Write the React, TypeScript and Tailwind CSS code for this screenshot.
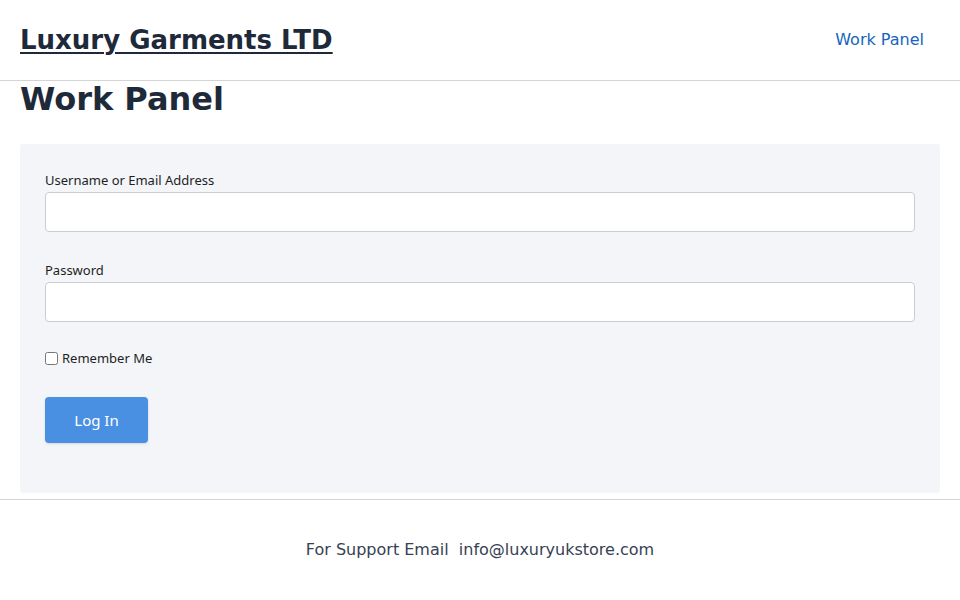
export default function App() {
    return (
        <div className="min-h-[600px] bg-white text-gray-800" style={{ fontFamily: '"DejaVu Sans", sans-serif' }}>
            <header className="flex h-[81px] items-center justify-between border-b border-[#d4d4d4] px-5">
                <a href="#" className="text-[26px] font-bold text-gray-800 underline decoration-2 underline-offset-[3px]">
                    Luxury Garments LTD
                </a>
                <a href="#" className="mr-4 text-base text-[#1565c0]">
                    Work Panel
                </a>
            </header>
            <main className="px-5">
                <h1 className="text-[32px] font-bold leading-[37px]">Work Panel</h1>
                <form
                    className="mt-[26px] rounded-[3px] bg-[#f3f5f9] px-[25px] pt-[26px] pb-[50px]"
                    style={{ fontFamily: '"Noto Sans", sans-serif' }}
                >
                    <label className="block text-[13px] leading-[20px] text-[#1e1e1e]">Username or Email Address</label>
                    <input
                        type="text"
                        className="mt-[2px] block h-10 w-full rounded-[4px] border border-[#c9ccd1] bg-white"
                    />
                    <label className="mt-[28px] block text-[13px] leading-[20px] text-[#1e1e1e]">Password</label>
                    <input
                        type="password"
                        className="mt-[2px] block h-10 w-full rounded-[4px] border border-[#c9ccd1] bg-white"
                    />
                    <label className="mt-[26px] flex items-center gap-[4px] text-[13px] leading-[20px] text-[#1e1e1e]">
                        <input type="checkbox" className="h-[13px] w-[13px]" />
                        Remember Me
                    </label>
                    <button
                        type="button"
                        className="mt-[29px] block h-[46px] w-[103px] rounded-[4px] bg-[#4a90e2] text-[15px] text-white shadow-sm"
                    >
                        Log In
                    </button>
                </form>
            </main>
            <footer className="mt-[6px] flex h-[100px] items-center justify-center border-t border-[#d4d4d4] text-base text-gray-700">
                <span className="whitespace-pre">For Support Email  info@luxuryukstore.com</span>
            </footer>
        </div>
    );
}
